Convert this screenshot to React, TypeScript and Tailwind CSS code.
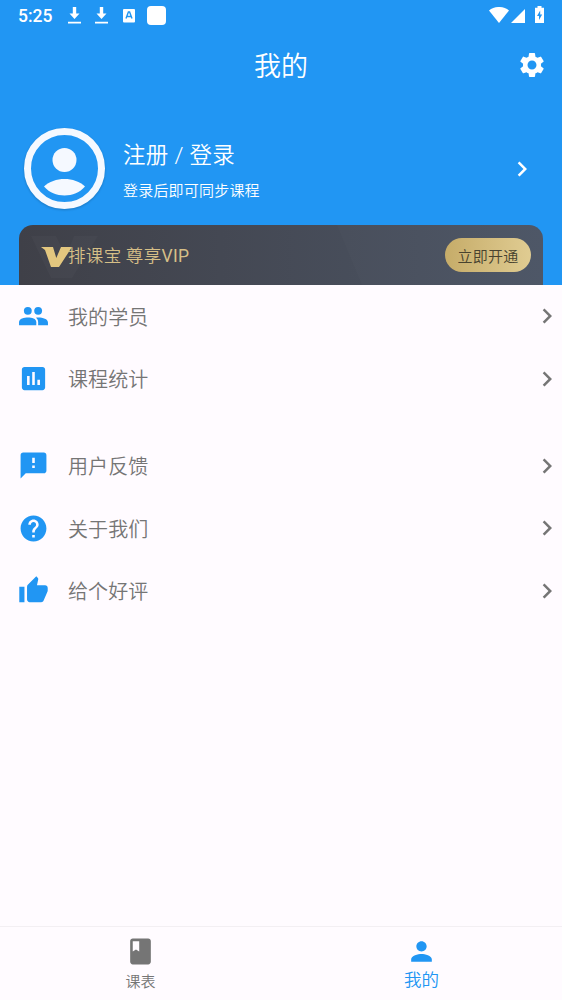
import React from 'react';
import type { IconType } from 'react-icons';
import {
  MdAssessment,
  MdBook,
  MdChevronRight,
  MdFeedback,
  MdHelp,
  MdPerson,
  MdSettings,
  MdThumbUp,
} from 'react-icons/md';

interface MenuItem {
  label: string;
  icon: IconType | typeof StudentsIcon;
}

function StudentsIcon({ size, className }: { size?: number | string; className?: string }) {
  return (
    <svg width={size} height={size} viewBox="0 0 30 30" fill="currentColor" className={className}>
      <circle cx="9.500" cy="9.500" r="3.800" />
      <circle cx="19.500" cy="9.500" r="3.800" />
      <path d="M1 20.500c0-3.500 5-4.500 8.700-4.500s8 1 8 4.500V23.500H1z" />
      <path d="M17.300 16.200c5-.6 11.700.8 11.700 4.600v2.700h-9.500v-3c0-1.900-.9-3.300-2.200-4.300z" />
    </svg>
  );
}

const COURSE_ITEMS: MenuItem[] = [
  { label: '我的学员', icon: StudentsIcon },
  { label: '课程统计', icon: MdAssessment },
];

const SUPPORT_ITEMS: MenuItem[] = [
  { label: '用户反馈', icon: MdFeedback },
  { label: '关于我们', icon: MdHelp },
  { label: '给个好评', icon: MdThumbUp },
];

function DownloadIcon() {
  return (
    <svg width="13" height="18" viewBox="0 0 13 18" fill="currentColor">
      <path d="M4.800 0h3.400v6.500h3.300L6.500 12 1.500 6.500h3.300zM0 14.800h13v1.700H0z" />
    </svg>
  );
}

function StatusBar() {
  return (
    <div className="flex h-[31px] items-center pl-[18px] pr-[18px]">
      <span className="w-[50px] pt-px font-['Roboto',sans-serif] text-[17.500px] font-medium">5:25</span>
      <div className="flex items-center">
        <DownloadIcon />
        <span className="ml-[14px]"><DownloadIcon /></span>
        <svg className="ml-[15px]" width="12" height="14" viewBox="0 0 12 14">
          <rect width="12" height="13.500" rx="1" fill="#fff" />
          <path d="M3 9.500 5.400 3h1.200L9 9.500M4 7.500h4" fill="none" stroke="#2196f3" strokeWidth="1.400" />
        </svg>
        <span className="-mt-px ml-3 h-[19px] w-[19px] rounded-[4px] bg-white" />
      </div>
      <div className="-mt-px ml-auto flex items-center">
        <svg width="20" height="16" viewBox="0 0 20 16" fill="currentColor">
          <path d="M0 3.500C5.500-1.200 14.500-1.200 20 3.500L10 16z" />
        </svg>
        <svg className="mt-px ml-[2px]" width="14" height="14" viewBox="0 0 14 14" fill="currentColor">
          <path d="M14 0v14H0z" />
        </svg>
        <svg className="-mt-px ml-[10px]" width="9" height="17" viewBox="0 0 9 17">
          <path d="M2.500 0h4v1.800H9V17H0V1.800h2.500z" fill="#fff" />
          <path d="M5.200 4.500 2 10h2v4l3.200-5.500h-2z" fill="#2196f3" />
        </svg>
      </div>
    </div>
  );
}

function Avatar() {
  return (
    <svg className="h-[82px] w-[82px] drop-shadow-[0_1px_1px_rgba(0,0,0,0.2)]" viewBox="0 0 82 82">
      <circle cx="41.500" cy="40.500" r="37" fill="#2196f3" stroke="#f5f9ff" strokeWidth="7" />
      <circle cx="41.500" cy="32" r="12" fill="#f5f9ff" />
      <path d="M21 58.500c10-10 31-10 41 0-10 12-31 12-41 0z" fill="#f5f9ff" />
    </svg>
  );
}

function VipBanner() {
  return (
    <div className="relative mx-[19px] mt-auto flex h-[60px] items-center overflow-hidden rounded-t-[14px] bg-linear-to-r from-[#3f4048] to-[#4c5565] pl-[22px] pr-3">
      <svg className="absolute inset-0" width="524" height="60" viewBox="0 0 524 60">
        <path d="M12 11h25l10 20 8-20h24L53 53H32z" fill="#fff" fillOpacity="0.025" />
        <path d="M318 0h206v60H343z" fill="#fff" fillOpacity="0.015" />
      </svg>
      <svg className="relative mt-1 shrink-0" width="31" height="20" viewBox="0 0 31 20">
        <path d="M0 0h12l3.300 11L20 0h11L18 20h-8L4 3z" fill="#e3c77f" />
      </svg>
      <span className="relative -ml-[4px] pt-[2px] text-[17.500px] tracking-[0.350px] text-[#d6bf87]">
        排课宝 尊享
        <span className="font-['Roboto',sans-serif] font-normal">VIP</span>
      </span>
      <button className="relative ml-auto h-[34px] w-[86px] rounded-full bg-linear-to-r from-[#c6ac69] to-[#e0cc92] pt-[2px] text-[15px] tracking-[0.2px] text-[#48432f]">
        立即开通
      </button>
    </div>
  );
}

function MenuRow({ label, icon: Icon }: MenuItem) {
  return (
    <div className="flex h-[62.400px] items-center pl-[18px]">
      <Icon size={31} className="text-[#2196f3]" />
      <span className="ml-[19px] pt-px text-[20px] tracking-[0.100px] text-[#757575]">{label}</span>
      <MdChevronRight size={30} className="ml-auto text-[#757575]" />
    </div>
  );
}

export default function App() {
  return (
    <div className="flex h-[1000px] w-[562px] flex-col overflow-hidden bg-[#fffbff] font-['Noto_Sans_CJK_SC',sans-serif] font-[350]">
      <header className="flex h-[285px] flex-col bg-[#2196f3] text-white">
        <StatusBar />
        <div className="grid h-[68px] grid-cols-[1fr_auto_1fr] items-center">
          <h1 className="col-start-2 text-[27px] font-[350]">我的</h1>
          <MdSettings size={30} className="mr-[15px] justify-self-end" />
        </div>
        <div className="mt-[29px] flex items-center pl-[23px] pr-[25px]">
          <Avatar />
          <div className="ml-[18px] pt-[2px]">
            <p className="font-['Roboto','Noto_Sans_CJK_SC',sans-serif] text-[22.500px] leading-[32px] tracking-[0.300px]">注册 / 登录</p>
            <p className="mt-[8px] text-[15px] leading-[22px] tracking-[0.200px]">登录后即可同步课程</p>
          </div>
          <MdChevronRight size={30} className="ml-auto" />
        </div>
        <VipBanner />
      </header>

      <main className="flex-1">
        {COURSE_ITEMS.map((item) => (
          <MenuRow key={item.label} {...item} />
        ))}
        <div className="h-[25px]" />
        {SUPPORT_ITEMS.map((item) => (
          <MenuRow key={item.label} {...item} />
        ))}
      </main>

      <nav className="grid h-[74px] grid-cols-2 border-t border-[#f3eff3]">
        <div className="flex flex-col items-center pt-[9px] text-[#757575]">
          <MdBook size={31} />
          <span className="mt-[3px] text-[15px] leading-[22px]">课表</span>
        </div>
        <div className="flex flex-col items-center pt-[9px] text-[#2196f3]">
          <MdPerson size={31} />
          <span className="text-[17.500px] leading-[24px]">我的</span>
        </div>
      </nav>
    </div>
  );
}
